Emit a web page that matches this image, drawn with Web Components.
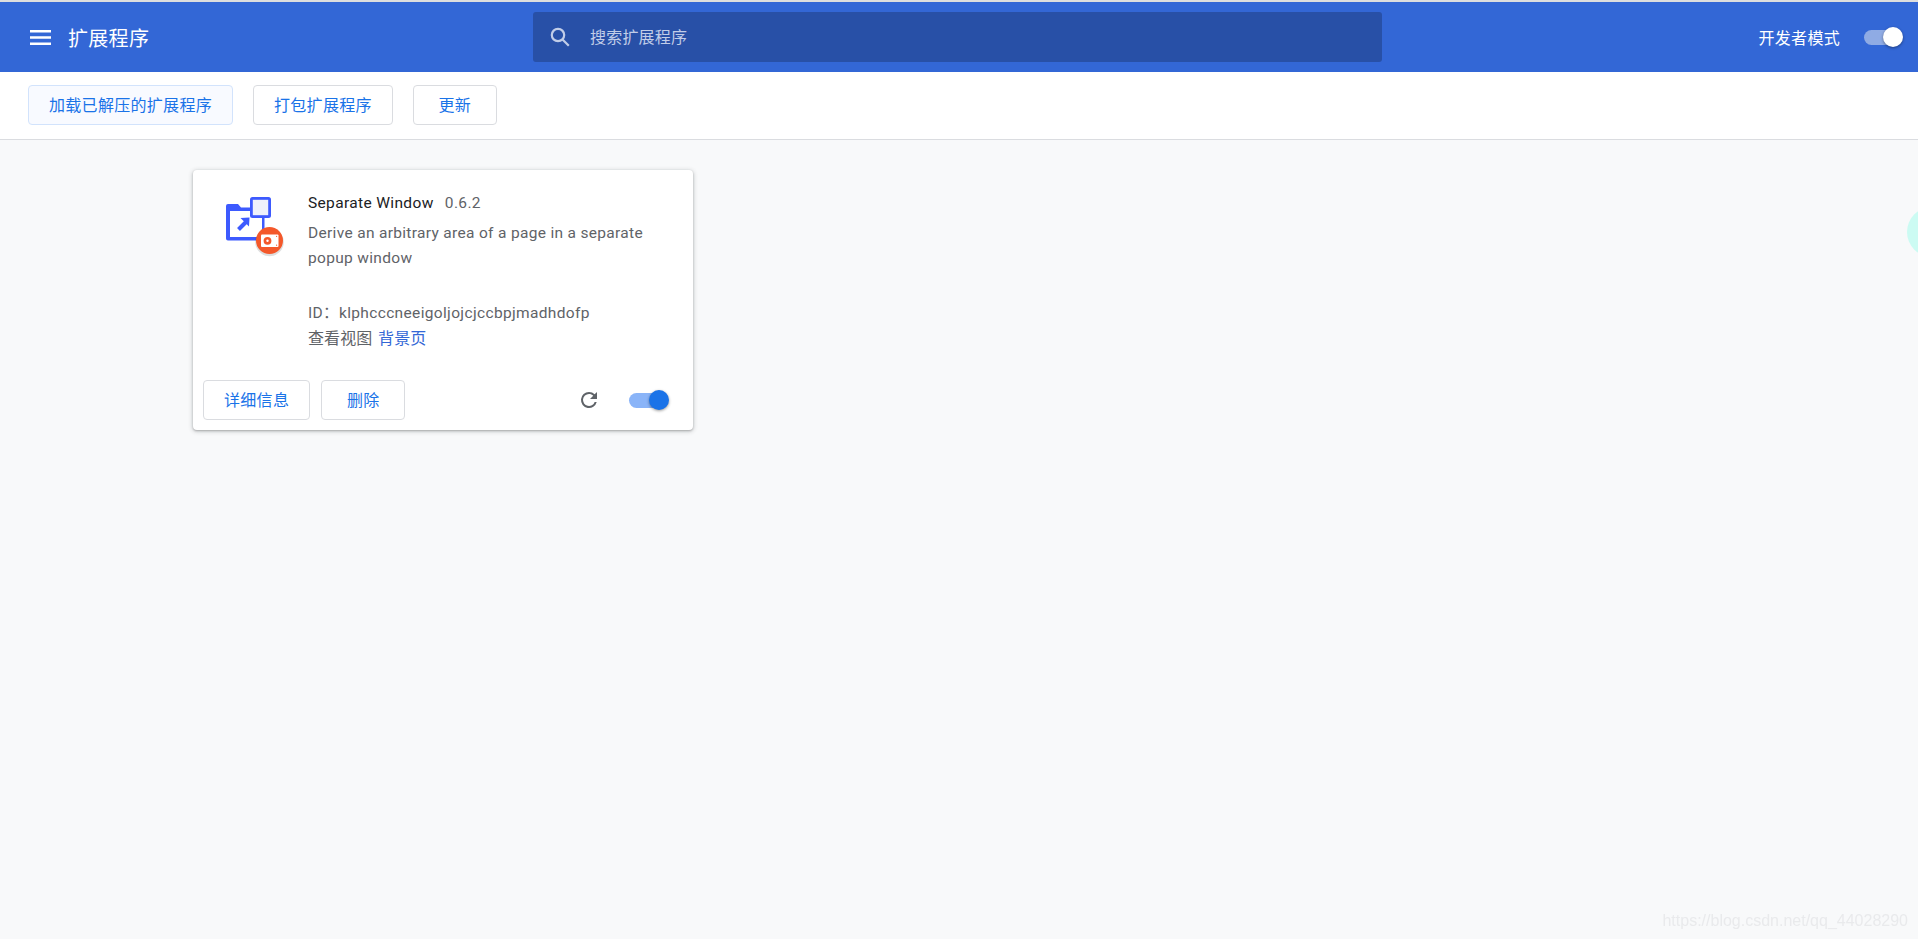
<!DOCTYPE html>
<html lang="zh-CN">
<head>
<meta charset="utf-8">
<title>扩展程序</title>
<style>
html,body{margin:0;height:100%;overflow:hidden;background:#f8f9fa;}
body{font-family:Roboto,"Noto Sans CJK SC",sans-serif;}
</style>
</head>
<body>
<ext-app></ext-app>
<script>
function comp(name, html){
  customElements.define(name, class extends HTMLElement{
    constructor(){super();this.attachShadow({mode:'open'}).innerHTML=html;}
  });
}
comp('ext-toggle',`<style>
:host{display:block;position:relative;width:40px;height:20px;--track:#8ab4f8;--thumb:#1a73e8;}
.t{position:absolute;left:0;right:5px;top:3px;height:15px;border-radius:8px;background:var(--track);}
.k{position:absolute;right:0;top:0;width:20px;height:20px;border-radius:50%;background:var(--thumb);box-shadow:0 1px 3px rgba(0,0,0,.4);}
</style><div class="t"></div><div class="k"></div>`);
comp('ext-button',`<style>
:host{display:inline-flex;align-items:center;justify-content:center;box-sizing:border-box;height:40px;min-width:84px;padding:0 20px 2px;border:1px solid #dadce0;border-radius:4px;background:#fff;color:#1a73e8;font:16px "Noto Sans CJK SC",Roboto,sans-serif;letter-spacing:.3px;white-space:nowrap;}
:host([active]){background:#f8faff;border-color:#d2e3fc;}
</style><slot></slot>`);
comp('ext-header',`<style>
:host{display:flex;align-items:center;box-sizing:border-box;height:70px;background:#3367d6;color:#fff;position:relative;}
.left{display:flex;align-items:center;width:533px;flex:none;box-sizing:border-box;padding-left:30px;}
.title{font:20px "Noto Sans CJK SC",sans-serif;letter-spacing:.3px;margin-left:17px;line-height:28px;padding-top:2px;}
.search{width:849px;height:50px;flex:none;background:#2850a7;border-radius:3px;display:flex;align-items:center;box-sizing:border-box;padding-left:17px;color:#c1cde8;font:16px "Noto Sans CJK SC",sans-serif;letter-spacing:.2px;}
.search svg{margin-right:20px;flex:none;}
.search span{padding-bottom:2px;}
.right{flex:1;display:flex;align-items:center;justify-content:flex-end;padding-right:15px;font:16px "Noto Sans CJK SC",sans-serif;letter-spacing:.3px;}
ext-toggle{margin-left:24px;width:39px;--track:#8fabe4;--thumb:#fff;}
</style>
<div class="left">
<svg width="21" height="15" viewBox="0 0 21 15"><path fill="#fff" d="M0 0h21v2.6H0zM0 6.2h21v2.6H0zM0 12.4h21V15H0z"/></svg>
<span class="title">扩展程序</span></div>
<div class="search">
<svg width="20" height="20" viewBox="0 0 20 20" fill="none" stroke="#c1cde8" stroke-width="2.2"><circle cx="8" cy="8" r="6.2"/><path d="M12.5 12.5l6.3 6.3"/></svg>
<span>搜索扩展程序</span></div>
<div class="right"><span>开发者模式</span><ext-toggle></ext-toggle></div>`);
comp('ext-toolbar',`<style>
:host{display:flex;align-items:center;gap:20px;box-sizing:border-box;height:68px;padding:0 0 2px 28px;background:#fff;border-bottom:1px solid #dadce0;}
</style><ext-button active>加载已解压的扩展程序</ext-button><ext-button>打包扩展程序</ext-button><ext-button>更新</ext-button>`);
comp('ext-card',`<style>
:host{display:flex;flex-direction:column;box-sizing:border-box;width:500px;height:260px;background:#fff;border-radius:4px;box-shadow:0 1px 2px rgba(60,64,67,.3),0 1px 4px 1px rgba(60,64,67,.2);}
.main{display:flex;flex:1;padding:27px 0 0 33px;}
.icon{flex:none;width:58px;height:60px;margin-right:24px;}
.body{font:15.5px/25.5px Roboto,"Noto Sans CJK SC",sans-serif;color:#5f6368;letter-spacing:.35px;margin-top:-6px;width:360px;}
.name{color:#202124;margin-right:7px;}
.desc{margin:4px 0 29px;letter-spacing:.32px;}
.cn{font:16px/24.5px "Noto Sans CJK SC",sans-serif;letter-spacing:.1px;margin-top:-1px;}
.cn b{font-weight:400;color:#3367d6;margin-left:2px;}
.foot{display:flex;align-items:center;padding:0 24px 10px 10px;}
.foot ext-button+ext-button{margin-left:11px;}
.sp{flex:1;}
ext-toggle{margin-left:28px;}
</style>
<div class="main">
<svg class="icon" viewBox="0 0 58 60">
<path fill="#3d5afe" d="M2 7h10l3 3.5h21.5a2 2 0 0 1 2 2v29a2 2 0 0 1-2 2H2a2 2 0 0 1-2-2V9a2 2 0 0 1 2-2z"/>
<rect x="4" y="14" width="32" height="26" fill="#fff"/>
<path stroke="#3d5afe" stroke-width="4" d="M12.5 32.5l7.5-7.5"/>
<path fill="#3d5afe" d="M14.5 21l9-.5-.5 9z"/>
<rect x="24" y="0" width="21" height="21" rx="2.5" fill="#3d5afe"/>
<rect x="26.8" y="2.8" width="15.4" height="15.4" fill="#eef1fb"/>
<circle cx="43.5" cy="45" r="14.3" fill="#000" opacity=".13"/>
<circle cx="43.5" cy="43.5" r="13.5" fill="#f4582a"/>
<rect x="35" y="37.5" width="17.5" height="12.5" rx="1" fill="#fff"/>
<circle cx="41.5" cy="43.8" r="3.9" fill="#f4582a"/><circle cx="41.5" cy="43.8" r="1.2" fill="#fff"/>
<circle cx="50.6" cy="39.3" r=".6" fill="#f4582a"/><circle cx="50.6" cy="48.2" r=".6" fill="#f4582a"/>
</svg>
<div class="body">
<div><span class="name">Separate Window</span> <span>0.6.2</span></div>
<div class="desc">Derive an arbitrary area of a page in a separate popup window</div>
<div>ID：klphcccneeigoljojcjccbpjmadhdofp</div>
<div class="cn">查看视图 <b>背景页</b></div>
</div>
</div>
<div class="foot">
<ext-button>详细信息</ext-button><ext-button>删除</ext-button><span class="sp"></span>
<svg width="24" height="24" viewBox="0 0 24 24"><path fill="#5f6368" d="M17.65 6.35A7.96 7.96 0 0 0 12 4a8 8 0 1 0 7.73 10h-2.08A6 6 0 1 1 12 6c1.66 0 3.14.69 4.22 1.78L13 11h7V4l-2.35 2.35z"/></svg>
<ext-toggle></ext-toggle>
</div>`);
comp('ext-app',`<style>
:host{display:block;height:939px;box-sizing:border-box;padding-top:2px;background:#f8f9fa;position:relative;overflow:hidden;}
.strip{position:absolute;left:0;right:0;top:0;height:2px;background:#dedede;}
main{padding:30px 0 0 193px;}
.orb{position:absolute;left:1907px;top:207px;width:50px;height:50px;border-radius:50%;background:#ccfbf3;}
.mark{position:absolute;right:10px;top:912px;font:16px "Liberation Sans",sans-serif;color:#e9eaec;filter:blur(.3px);}
</style>
<div class="strip"></div>
<ext-header></ext-header><ext-toolbar></ext-toolbar>
<main><ext-card></ext-card></main>
<div class="orb"></div>
<div class="mark">https://blog.csdn.net/qq_44028290</div>`);
</script>
</body>
</html>
